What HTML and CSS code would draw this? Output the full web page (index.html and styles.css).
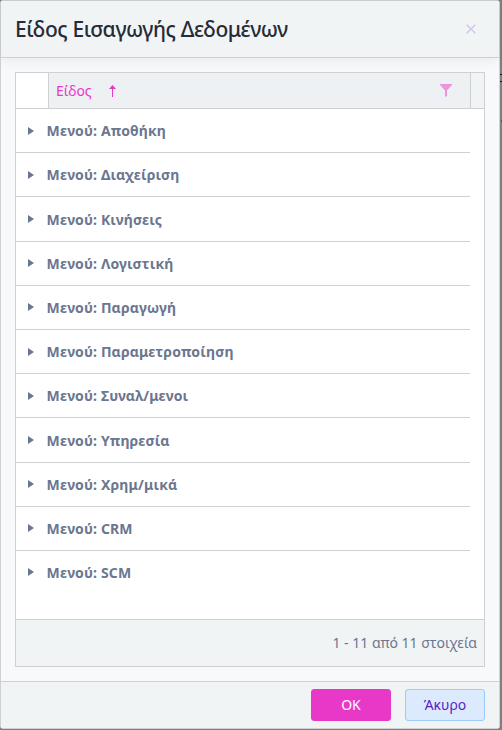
FILE: index.html
```html
<!DOCTYPE html>
<html lang="el">
<head>
  <meta charset="UTF-8">
  <meta name="viewport" content="width=device-width, initial-scale=1.0">
  <title>Είδος Εισαγωγής Δεδομένων</title>
  <link rel="stylesheet" href="styles.css">
</head>
<body>
  <div class="backdrop">
    <span class="behind field"></span>
    <span class="behind link"></span>
  </div>
  <div class="modal">
    <div class="modal-header">
      <h1>Είδος Εισαγωγής Δεδομένων</h1>
      <button class="close" aria-label="Κλείσιμο">
        <svg width="10" height="10" viewBox="0 0 10 10"><path d="M.7 .7l8.6 8.6M9.3 .7L.7 9.3" stroke="#d0c5ef" stroke-width="1.4" fill="none"/></svg>
      </button>
    </div>
    <div class="modal-body">
      <div class="grid">
        <div class="grid-header">
          <div class="cell-empty"></div>
          <div class="cell-title">
            <span>Είδος</span>
            <svg class="sort" width="7" height="12" viewBox="0 0 7 12"><path d="M3 2h1v10H3zM3.5 0L7 4H0z" fill="#e838c8"/></svg>
            <svg class="filter" width="12" height="13" viewBox="0 0 12 13"><path d="M0 0h12v1L7 6.5V12l-2 1V6.5L0 1z" fill="#eb96dc"/></svg>
          </div>
          <div class="cell-scroll"></div>
        </div>
        <div class="grid-content">
          <div class="row"><i class="arrow"></i><span>Μενού: Αποθήκη</span></div>
          <div class="row"><i class="arrow"></i><span>Μενού: Διαχείριση</span></div>
          <div class="row"><i class="arrow"></i><span>Μενού: Κινήσεις</span></div>
          <div class="row"><i class="arrow"></i><span>Μενού: Λογιστική</span></div>
          <div class="row"><i class="arrow"></i><span>Μενού: Παραγωγή</span></div>
          <div class="row"><i class="arrow"></i><span>Μενού: Παραμετροποίηση</span></div>
          <div class="row"><i class="arrow"></i><span>Μενού: Συναλ/μενοι</span></div>
          <div class="row"><i class="arrow"></i><span>Μενού: Υπηρεσία</span></div>
          <div class="row"><i class="arrow"></i><span>Μενού: Χρημ/μικά</span></div>
          <div class="row"><i class="arrow"></i><span>Μενού: CRM</span></div>
          <div class="row"><i class="arrow"></i><span>Μενού: SCM</span></div>
        </div>
        <div class="grid-pager">1 - 11 από 11 στοιχεία</div>
      </div>
    </div>
    <div class="modal-footer">
      <button class="btn btn-ok">OK</button>
      <button class="btn btn-cancel">Άκυρο</button>
    </div>
  </div>
</body>
</html>
```

FILE: styles.css
```css
* {
  box-sizing: border-box;
}
body {
  margin: 0;
  height: 730px;
  overflow: hidden;
  background-color: #7f7f7f;
  font-family: "Noto Sans", sans-serif;
  font-size: 14px;
  color: #6b7690;
}
.behind {
  position: absolute;
  right: 0;
  width: 2px;
}
.field {
  top: 74px;
  height: 8px;
  background-color: #6d8491;
  border-top: 1px solid #111;
  border-bottom: 1px solid #111;
}
.link {
  top: 120px;
  width: 1px;
  height: 2px;
  background-color: #35618a;
}
.modal {
  display: flex;
  flex-direction: column;
  width: 500px;
  height: 729px;
  border: 1px solid #cfd0d1;
  border-radius: 3px;
  background-color: #f8f9fb;
}
.modal-header {
  display: flex;
  align-items: center;
  justify-content: space-between;
  height: 57px;
  padding: 0 23px 0 14px;
  border-bottom: 1px solid #cfd0d1;
  background-color: #f1f4f5;
  box-shadow: 0 2px 12px rgba(0,0,0,0.07);
}
h1 {
  margin: 0;
  font-size: 21px;
  font-weight: 500;
  line-height: 28px;
  letter-spacing: -0.4px;
  color: #272b38;
}
.close {
  display: flex;
  padding: 0;
  border: 0;
  background: none;
}
.modal-body {
  flex: 1;
  padding: 14px;
}
.grid {
  display: flex;
  flex-direction: column;
  height: 595px;
  border: 1px solid #cfd0d1;
  background-color: #fff;
}
.grid-header {
  display: flex;
  height: 36px;
  border-bottom: 1px solid #cfd0d1;
  background-color: #edf1f4;
}
.cell-empty {
  width: 33px;
  border-right: 1px solid #cfd0d1;
  background-color: #fff;
}
.cell-title {
  display: flex;
  flex: 1;
  align-items: center;
  padding: 0 18px 0 7px;
  border-right: 1px solid #cfd0d1;
  color: #e838c8;
}
.sort {
  margin-left: 17px;
}
.filter {
  margin-left: auto;
}
.cell-scroll {
  width: 13px;
  background-color: #f1f4f5;
}
.grid-content {
  flex: 1;
  padding-right: 14px;
}
.row {
  display: flex;
  align-items: center;
  height: 44.2px;
  padding-left: 12px;
  border-bottom: 1px solid #cfd0d1;
  font-weight: bold;
  letter-spacing: 0.15px;
}
.row:last-child {
  border-bottom-color: transparent;
}
.row span {
  padding-top: 0.3px;
}
.arrow {
  margin-right: 12.6px;
  border: 4px solid transparent;
  border-left: 6px solid #6b7690;
  border-right: 0;
}
.grid-pager {
  height: 47px;
  padding-right: 7px;
  border-top: 1px solid #cfd0d1;
  background-color: #f1f4f5;
  line-height: 46px;
  text-align: right;
}
.modal-footer {
  display: flex;
  justify-content: flex-end;
  gap: 14px;
  height: 47px;
  padding: 7px 14px;
  border-top: 1px solid #cfd0d1;
  background-color: #f1f4f5;
}
.btn {
  width: 80px;
  height: 32px;
  padding: 0 0 2px;
  border: 1px solid #e838c8;
  border-radius: 3px;
  font-family: inherit;
  font-size: 14px;
}
.btn-ok {
  background-color: #e838c8;
  color: #fff;
}
.btn-cancel {
  border-color: #9bcbfb;
  background-color: #dceafe;
  color: #5a1ec8;
}
```
